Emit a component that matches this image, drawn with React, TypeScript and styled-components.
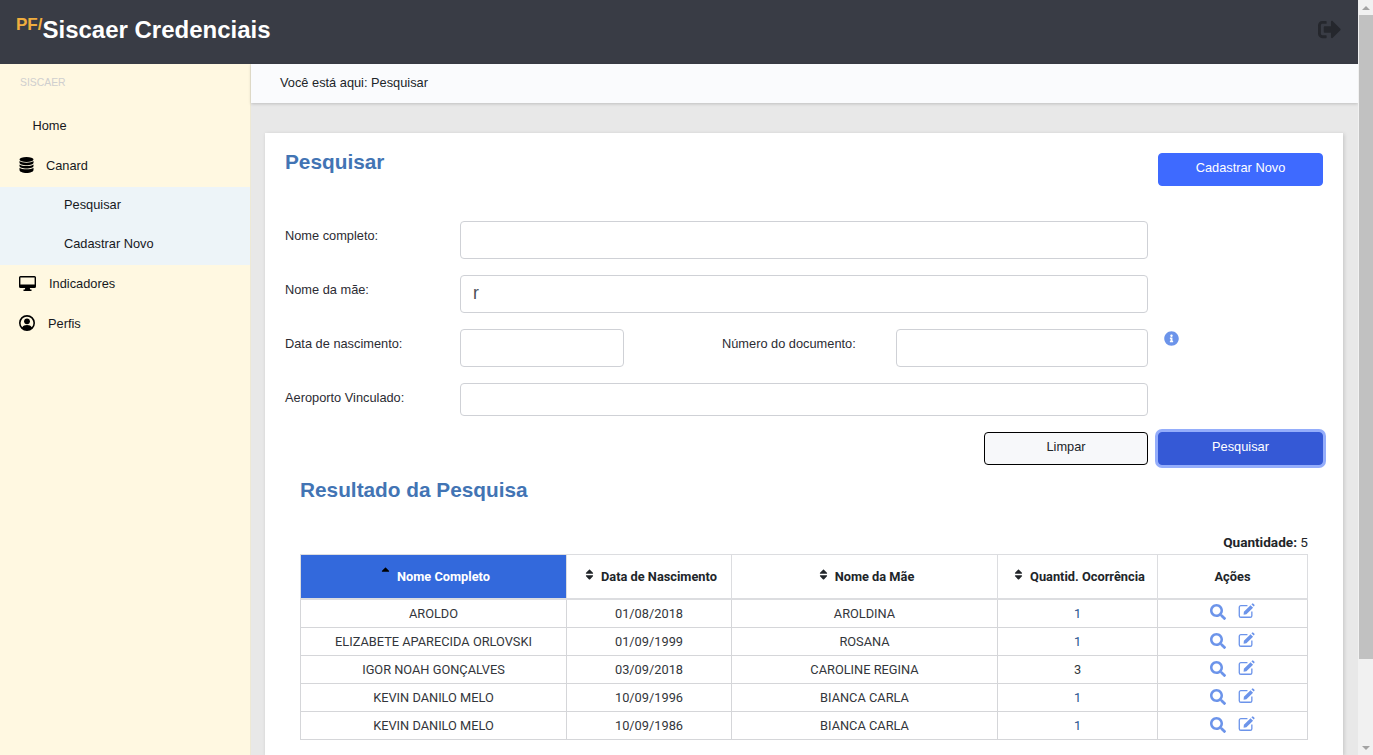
import styled, { createGlobalStyle } from 'styled-components';
import {
	FaInfoCircle,
	FaSearch,
	FaSignOutAlt,
	FaSort,
	FaSortUp
} from 'react-icons/fa';

type Person = {
	name: string;
	birth: string;
	mother: string;
	count: number;
};

const people: Person[] = [
	{ name: 'AROLDO', birth: '01/08/2018', mother: 'AROLDINA', count: 1 },
	{ name: 'ELIZABETE APARECIDA ORLOVSKI', birth: '01/09/1999', mother: 'ROSANA', count: 1 },
	{ name: 'IGOR NOAH GONÇALVES', birth: '03/09/2018', mother: 'CAROLINE REGINA', count: 3 },
	{ name: 'KEVIN DANILO MELO', birth: '10/09/1996', mother: 'BIANCA CARLA', count: 1 },
	{ name: 'KEVIN DANILO MELO', birth: '10/09/1986', mother: 'BIANCA CARLA', count: 1 }
];

const GlobalStyle = createGlobalStyle`
	* {
		box-sizing: border-box;
	}

	html,
	body {
		margin: 0;
		height: 100%;
		overflow: hidden;
	}

	body {
		font-family: 'Liberation Sans', Arial, sans-serif;
		font-size: 12.8px;
		color: #212529;
	}
`;

const Screen = styled.div`
	display: flex;
	width: 1373px;
	height: 755px;
	overflow: hidden;
`;

const Page = styled.div`
	flex: 1;
	min-width: 0;
	display: flex;
	flex-direction: column;
`;

const Header = styled.header`
	height: 64px;
	flex: none;
	display: flex;
	align-items: flex-start;
	justify-content: space-between;
	background: #393c45;
	padding: 0 17px 0 16px;
`;

const Brand = styled.div`
	display: flex;
	align-items: flex-start;
	font-weight: 700;
`;

const BrandPrefix = styled.span`
	font-size: 17px;
	line-height: 18px;
	margin-top: 16px;
	color: #f0ad3e;
`;

const BrandName = styled.h1`
	margin: 16px 0 0;
	font-size: 24px;
	line-height: 28px;
	color: #fff;
`;

const LogoutButton = styled.span`
	display: flex;
	margin-top: 18px;
	color: #25272d;
	font-size: 23px;
`;

const Body = styled.div`
	flex: 1;
	min-height: 0;
	display: flex;
`;

const Sidebar = styled.nav`
	width: 251px;
	flex: none;
	background: #fff8e1;
	border-right: 1px solid #eee9d5;
`;

const SidebarTitle = styled.div`
	height: 43px;
	padding: 12px 0 0 20px;
	font-size: 10.4px;
	line-height: 13px;
	color: #cfcfcf;
`;

const NavItem = styled.div<{ $gap?: number }>`
	display: flex;
	align-items: center;
	height: 40px;
	padding: 0 0 4px 19px;
	gap: ${(props) => props.$gap ?? 12}px;
	color: #16181d;
`;

const HomeItem = styled(NavItem)`
	padding-left: 32.5px;
`;

const NavIcon = styled.svg`
	flex: none;
	fill: #000;
`;

const SubNav = styled.div`
	background: #edf4f8;
`;

const SubNavItem = styled.div`
	display: flex;
	align-items: center;
	height: 39px;
	padding: 0 0 4px 64px;
	color: #16181d;
`;

const Main = styled.main`
	flex: 1;
	min-width: 0;
	display: flex;
	flex-direction: column;
	background: #e8e8e8;
`;

const Breadcrumb = styled.div`
	height: 39px;
	flex: none;
	display: flex;
	align-items: center;
	padding: 0 0 3px 29px;
	background: #fafbfd;
	box-shadow: 0 1px 3px rgba(0, 0, 0, 0.18);
`;

const Content = styled.div`
	flex: 1;
	min-height: 0;
	padding: 30px 15px 0 14px;
`;

const Card = styled.section`
	height: 100%;
	background: #fff;
	padding: 20px 20px 0;
	box-shadow: 1px 1px 4px rgba(0, 0, 0, 0.16);
`;

const CardTop = styled.div`
	display: flex;
	justify-content: space-between;
	align-items: flex-start;
	height: 68px;
`;

const PageTitle = styled.h2`
	margin: -4px 0 0;
	font-size: 20.8px;
	line-height: 25px;
	color: #4274b4;
`;

const Button = styled.button<{ $variant: 'primary' | 'focused' | 'outline' }>`
	width: ${(props) => (props.$variant === 'outline' ? 164 : 165)}px;
	height: 33px;
	padding: 0 0 4px;
	border-radius: 4px;
	font-family: inherit;
	font-size: 12.8px;
	border: 1px solid
		${(props) =>
			props.$variant === 'outline'
				? '#000'
				: props.$variant === 'focused'
				? '#3559d6'
				: '#3e6aff'};
	background: ${(props) =>
		props.$variant === 'outline'
			? '#f7f8fa'
			: props.$variant === 'focused'
			? '#3559d6'
			: '#3e6aff'};
	color: ${(props) => (props.$variant === 'outline' ? '#212529' : '#fff')};
	box-shadow: ${(props) =>
		props.$variant === 'focused' ? '0 0 0 3px #94adfb' : 'none'};
`;

const Form = styled.div`
	display: flex;
	flex-direction: column;
	gap: 16px;
`;

const FormRow = styled.div`
	display: flex;
	align-items: flex-start;
`;

const Label = styled.label<{ $width: number; $offset?: number }>`
	width: ${(props) => props.$width}px;
	margin-left: ${(props) => props.$offset ?? 0}px;
	flex: none;
	padding-top: 7px;
	line-height: 15px;
	color: #2c2c33;
`;

const Input = styled.input<{ $width: number; $short?: boolean }>`
	width: ${(props) => props.$width}px;
	height: ${(props) => (props.$short ? 33 : 38)}px;
	flex: none;
	padding: 0 12px 2px;
	border: 1px solid #cfd1d6;
	border-radius: 4px;
	background: #fff;
	font-family: 'Liberation Sans', Arial, sans-serif;
	font-size: 17.6px;
	color: #495057;
`;

const InfoIcon = styled.span`
	display: flex;
	margin: 2px 0 0 16px;
	color: #6c94ea;
	font-size: 15px;
`;

const FormActions = styled.div`
	display: flex;
	justify-content: flex-end;
	gap: 10px;
	margin-top: 16px;
`;

const Results = styled.div`
	padding: 0 15px;
`;

const ResultsTitle = styled.h2`
	margin: 12px 0 0;
	font-size: 20.8px;
	line-height: 26px;
	color: #4274b4;
`;

const Count = styled.div`
	margin-top: 32px;
	height: 19px;
	width: 1008px;
	text-align: right;
	font-family: 'Roboto', sans-serif;
	font-size: 13.6px;
	line-height: 15px;

	strong {
		font-weight: 700;
	}
`;

const Table = styled.table`
	width: 1007px;
	border-collapse: collapse;
	table-layout: fixed;
	font-family: 'Roboto', sans-serif;
	font-size: 12.8px;

	tbody tr:first-child td {
		height: 29px;
	}
`;

const HeadCell = styled.th<{ $active?: boolean; $width: number }>`
	width: ${(props) => props.$width}px;
	height: 44px;
	padding: 0;
	border: 1px solid #dcdde0;
	border-bottom-width: 2px;
	background: ${(props) => (props.$active ? '#3369dc' : '#fff')};
	color: ${(props) => (props.$active ? '#fff' : '#212529')};
	font-weight: 700;

	svg {
		color: #212529;
		font-size: 13px;
		margin: 0 5px 0 2px;
	}
`;

const ActiveSort = styled(FaSortUp)`
	&& {
		color: #000;
		position: relative;
		top: -2px;
	}
`;

const Cell = styled.td<{ $link?: boolean }>`
	height: 28px;
	padding: 0;
	border: 1px solid #d5d6d9;
	text-align: center;
	color: ${(props) => (props.$link ? '#2a5490' : '#33363b')};
`;

const Actions = styled.div`
	display: flex;
	justify-content: center;
	align-items: flex-start;
	gap: 12px;
	padding-bottom: 2px;
	color: #6c94ea;
	font-size: 16px;
`;

const EditIcon = styled.svg`
	margin-top: -1px;
	fill: currentColor;
`;

const Scrollbar = styled.div`
	width: 15px;
	flex: none;
	display: flex;
	flex-direction: column;
	background: #f1f1f1;
`;

const ScrollArrow = styled.div<{ $down?: boolean }>`
	height: 15px;
	flex: none;
	display: flex;
	align-items: center;
	justify-content: center;

	&::before {
		content: '';
		border-left: 4px solid transparent;
		border-right: 4px solid transparent;
		border-${(props) => (props.$down ? 'top' : 'bottom')}: 4px solid #a3a3a3;
	}
`;

const ScrollThumb = styled.div`
	height: 644px;
	margin-left: 1px;
	background: #c1c1c1;
`;

const ScrollTrack = styled.div`
	flex: 1;
`;

const DatabaseIcon = () => (
	<NavIcon width="15" height="16" viewBox="0 0 15 16">
		<ellipse cx="7.5" cy="2.5" rx="7" ry="2.5" />
		<path d="M.5 4.1v1.6c0 1.4 3.1 2.5 7 2.5s7-1.1 7-2.5V4.1c-1.5 1-4 1.6-7 1.6s-5.5-.6-7-1.6z" />
		<path d="M.5 7.4V9c0 1.4 3.1 2.5 7 2.5s7-1.1 7-2.5V7.4c-1.5 1-4 1.6-7 1.6s-5.5-.6-7-1.6z" />
		<path d="M.5 10.7V13c0 1.6 3.1 3 7 3s7-1.4 7-3v-2.3c-1.5 1-4 1.6-7 1.6s-5.5-.6-7-1.6z" />
	</NavIcon>
);

const DesktopIcon = () => (
	<NavIcon width="17" height="15" viewBox="0 0 17 15">
		<path
			fillRule="evenodd"
			d="M1.5 0h14A1.5 1.5 0 0 1 17 1.5v9a1.5 1.5 0 0 1-1.5 1.5h-4.7l.4 1.5h1.3V15H4.5v-1.5h1.3l.4-1.5H1.5A1.5 1.5 0 0 1 0 10.5v-9A1.5 1.5 0 0 1 1.5 0zm-.1 1.4v7.2h14.2V1.4z"
		/>
	</NavIcon>
);

const UserIcon = () => (
	<NavIcon width="16" height="16" viewBox="0 0 16 16">
		<path
			fillRule="evenodd"
			d="M8 0a8 8 0 1 1 0 16A8 8 0 0 1 8 0zm0 1.7a6.3 6.3 0 0 0-4.7 10.5C4 10.8 5.8 10 8 10s4 .8 4.7 2.2A6.3 6.3 0 0 0 8 1.7z"
		/>
		<circle cx="8" cy="6.3" r="2.9" />
	</NavIcon>
);

const EditGlyph = () => (
	<EditIcon width="17" height="15" viewBox="0 0 18 16">
		<path
			fill="none"
			stroke="currentColor"
			strokeWidth="1.4"
			d="M10 2.8H3a1.7 1.7 0 0 0-1.7 1.7v9A1.7 1.7 0 0 0 3 15.2h10a1.7 1.7 0 0 0 1.7-1.7V9"
		/>
		<path d="M6.2 9.4 13.3 2.3l2.7 2.7-7.100 7.100-3 .3zM14.200 1.400l.7-.7a1 1 0 0 1 1.400 0l1 1a1 1 0 0 1 0 1.400l-.7.7z" />
	</EditIcon>
);

const App = () => {
	return (
		<>
			<GlobalStyle />
			<Screen>
				<Page>
					<Header>
						<Brand>
							<BrandPrefix>PF/</BrandPrefix>
							<BrandName>Siscaer Credenciais</BrandName>
						</Brand>
						<LogoutButton>
							<FaSignOutAlt />
						</LogoutButton>
					</Header>
					<Body>
						<Sidebar>
							<SidebarTitle>SISCAER</SidebarTitle>
							<HomeItem>Home</HomeItem>
							<NavItem>
								<DatabaseIcon />
								Canard
							</NavItem>
							<SubNav>
								<SubNavItem>Pesquisar</SubNavItem>
								<SubNavItem>Cadastrar Novo</SubNavItem>
							</SubNav>
							<NavItem $gap={13}>
								<DesktopIcon />
								Indicadores
							</NavItem>
							<NavItem $gap={13}>
								<UserIcon />
								Perfis
							</NavItem>
						</Sidebar>
						<Main>
							<Breadcrumb>Você está aqui: Pesquisar</Breadcrumb>
							<Content>
								<Card>
									<CardTop>
										<PageTitle>Pesquisar</PageTitle>
										<Button $variant="primary">Cadastrar Novo</Button>
									</CardTop>
									<Form>
										<FormRow>
											<Label $width={175}>Nome completo:</Label>
											<Input $width={688} />
										</FormRow>
										<FormRow>
											<Label $width={175}>Nome da mãe:</Label>
											<Input $width={688} defaultValue="r" />
										</FormRow>
										<FormRow>
											<Label $width={175}>Data de nascimento:</Label>
											<Input $width={164} />
											<Label $width={174} $offset={98}>
												Número do documento:
											</Label>
											<Input $width={252} />
											<InfoIcon>
												<FaInfoCircle />
											</InfoIcon>
										</FormRow>
										<FormRow>
											<Label $width={175}>Aeroporto Vinculado:</Label>
											<Input $width={688} $short />
										</FormRow>
									</Form>
									<FormActions>
										<Button $variant="outline">Limpar</Button>
										<Button $variant="focused">Pesquisar</Button>
									</FormActions>
									<Results>
										<ResultsTitle>Resultado da Pesquisa</ResultsTitle>
										<Count>
											<strong>Quantidade:</strong> 5
										</Count>
										<Table>
											<thead>
												<tr>
													<HeadCell $active $width={266}>
														<ActiveSort />
														Nome Completo
													</HeadCell>
													<HeadCell $width={165}>
														<FaSort />
														Data de Nascimento
													</HeadCell>
													<HeadCell $width={266}>
														<FaSort />
														Nome da Mãe
													</HeadCell>
													<HeadCell $width={160}>
														<FaSort />
														Quantid. Ocorrência
													</HeadCell>
													<HeadCell $width={150}>Ações</HeadCell>
												</tr>
											</thead>
											<tbody>
												{people.map((person) => (
													<tr key={person.birth}>
														<Cell>{person.name}</Cell>
														<Cell>{person.birth}</Cell>
														<Cell>{person.mother}</Cell>
														<Cell $link={person.count === 1}>{person.count}</Cell>
														<Cell>
															<Actions>
																<FaSearch />
																<EditGlyph />
															</Actions>
														</Cell>
													</tr>
												))}
											</tbody>
										</Table>
									</Results>
								</Card>
							</Content>
						</Main>
					</Body>
				</Page>
				<Scrollbar>
					<ScrollArrow />
					<ScrollThumb />
					<ScrollTrack />
					<ScrollArrow $down />
				</Scrollbar>
			</Screen>
		</>
	);
};

export default App;
